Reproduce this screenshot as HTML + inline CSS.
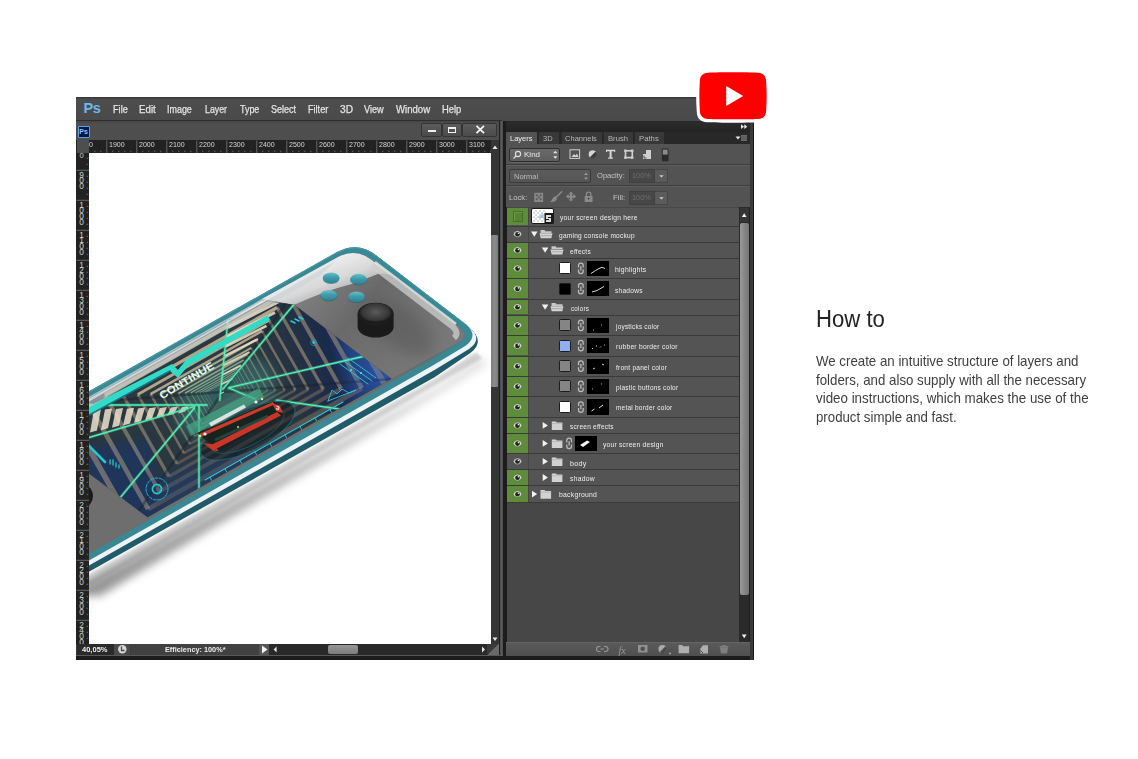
<!DOCTYPE html>
<html><head><meta charset="utf-8">
<style>
*{margin:0;padding:0;box-sizing:border-box}
html,body{width:1138px;height:759px;background:#fff;overflow:hidden;position:relative;font-family:"Liberation Sans",sans-serif}
.a{position:absolute}
.t{position:absolute;white-space:nowrap;line-height:1;transform-origin:0 0}
svg{position:absolute;overflow:visible}
</style></head><body>

<div class="a" style="left:76px;top:97px;width:678px;height:563px;background:#262626"></div>
<div class="a" style="left:76px;top:97px;width:678px;height:24px;background:linear-gradient(#3a3a3a 0,#3a3a3a 1px,#4d4d4d 2px,#4a4a4a 100%)"></div>
<div class="a" style="left:76px;top:120px;width:426px;height:1px;background:#2e2e2e"></div>
<div class="t" style="left:83.5px;top:100.5px;font-size:14.6px;font-weight:bold;color:#6fb6ee;letter-spacing:-0.4px">Ps</div>
<div class="t" style="left:113.23px;top:104.01px;font-size:10.5px;color:#e4e4e4;font-weight:normal;letter-spacing:0px;transform:scaleX(0.877);-webkit-text-stroke:0.25px #e4e4e4">File</div>
<div class="t" style="left:139.13px;top:104.01px;font-size:10.5px;color:#e4e4e4;font-weight:normal;letter-spacing:0px;transform:scaleX(0.925);-webkit-text-stroke:0.25px #e4e4e4">Edit</div>
<div class="t" style="left:167.33px;top:104.01px;font-size:10.5px;color:#e4e4e4;font-weight:normal;letter-spacing:0px;transform:scaleX(0.851);-webkit-text-stroke:0.25px #e4e4e4">Image</div>
<div class="t" style="left:205.13px;top:104.01px;font-size:10.5px;color:#e4e4e4;font-weight:normal;letter-spacing:0px;transform:scaleX(0.839);-webkit-text-stroke:0.25px #e4e4e4">Layer</div>
<div class="t" style="left:239.63px;top:104.01px;font-size:10.5px;color:#e4e4e4;font-weight:normal;letter-spacing:0px;transform:scaleX(0.849);-webkit-text-stroke:0.25px #e4e4e4">Type</div>
<div class="t" style="left:270.53px;top:104.01px;font-size:10.5px;color:#e4e4e4;font-weight:normal;letter-spacing:0px;transform:scaleX(0.861);-webkit-text-stroke:0.25px #e4e4e4">Select</div>
<div class="t" style="left:308.03px;top:104.01px;font-size:10.5px;color:#e4e4e4;font-weight:normal;letter-spacing:0px;transform:scaleX(0.867);-webkit-text-stroke:0.25px #e4e4e4">Filter</div>
<div class="t" style="left:340.13px;top:104.01px;font-size:10.5px;color:#e4e4e4;font-weight:normal;letter-spacing:0px;transform:scaleX(0.97);-webkit-text-stroke:0.25px #e4e4e4">3D</div>
<div class="t" style="left:364.13px;top:104.01px;font-size:10.5px;color:#e4e4e4;font-weight:normal;letter-spacing:0px;transform:scaleX(0.874);-webkit-text-stroke:0.25px #e4e4e4">View</div>
<div class="t" style="left:396.33px;top:104.01px;font-size:10.5px;color:#e4e4e4;font-weight:normal;letter-spacing:0px;transform:scaleX(0.914);-webkit-text-stroke:0.25px #e4e4e4">Window</div>
<div class="t" style="left:442.43px;top:104.01px;font-size:10.5px;color:#e4e4e4;font-weight:normal;letter-spacing:0px;transform:scaleX(0.895);-webkit-text-stroke:0.25px #e4e4e4">Help</div>
<div class="a" style="left:76px;top:121px;width:426px;height:19px;background:linear-gradient(#454545,#4f4f4f 3px,#4e4e4e)"></div>
<div class="a" style="left:77.5px;top:125.5px;width:12.3px;height:12.0px;background:#061747;border:1px solid #5e9ee6;border-radius:1px"></div>
<div class="t" style="left:79.3px;top:127.6px;font-size:7px;font-weight:bold;color:#8cc4ff">Ps</div>
<div class="a" style="left:420.9px;top:122.7px;width:20.7px;height:13.9px;background:linear-gradient(#5c5c5c,#4b4b4b);border:1px solid #343434;border-radius:2px"></div>
<div class="a" style="left:441.8px;top:122.7px;width:20.4px;height:13.9px;background:linear-gradient(#5c5c5c,#4b4b4b);border:1px solid #343434;border-radius:2px"></div>
<div class="a" style="left:462.4px;top:122.7px;width:35.0px;height:13.9px;background:linear-gradient(#5c5c5c,#4b4b4b);border:1px solid #343434;border-radius:2px"></div>
<div class="a" style="left:427.5px;top:130.3px;width:8.0px;height:2.0px;background:#f0f0f0"></div>
<div class="a" style="left:448px;top:126.5px;width:8px;height:6.5px;border:1.6px solid #f0f0f0;border-top-width:2.4px"></div>
<svg style="left:0;top:0" width="1" height="1"><path d="M476.5 125.8 L484 133.2 M484 125.8 L476.5 133.2" stroke="#f4f4f4" stroke-width="1.8"/></svg>
<div class="a" style="left:76px;top:140px;width:415px;height:13px;background:#222"></div>
<div class="a" style="left:76px;top:153px;width:13px;height:491px;background:#222"></div>
<div class="a" style="left:76.5px;top:140px;width:12.5px;height:12.5px;background:#4e4e4e"></div>
<svg style="left:0;top:0" width="1" height="1"><path d="M94.8 150.6V152.2 M100.8 150.6V152.2 M106.8 140.5V153 M112.8 150.6V152.2 M118.8 150.6V152.2 M124.8 150.6V152.2 M130.8 150.6V152.2 M136.8 140.5V153 M142.8 150.6V152.2 M148.8 150.6V152.2 M154.8 150.6V152.2 M160.8 150.6V152.2 M166.8 140.5V153 M172.8 150.6V152.2 M178.8 150.6V152.2 M184.8 150.6V152.2 M190.8 150.6V152.2 M196.8 140.5V153 M202.8 150.6V152.2 M208.8 150.6V152.2 M214.8 150.6V152.2 M220.8 150.6V152.2 M226.8 140.5V153 M232.8 150.6V152.2 M238.8 150.6V152.2 M244.8 150.6V152.2 M250.8 150.6V152.2 M256.8 140.5V153 M262.8 150.6V152.2 M268.8 150.6V152.2 M274.8 150.6V152.2 M280.8 150.6V152.2 M286.8 140.5V153 M292.8 150.6V152.2 M298.8 150.6V152.2 M304.8 150.6V152.2 M310.8 150.6V152.2 M316.8 140.5V153 M322.8 150.6V152.2 M328.8 150.6V152.2 M334.8 150.6V152.2 M340.8 150.6V152.2 M346.8 140.5V153 M352.8 150.6V152.2 M358.8 150.6V152.2 M364.8 150.6V152.2 M370.8 150.6V152.2 M376.8 140.5V153 M382.8 150.6V152.2 M388.8 150.6V152.2 M394.8 150.6V152.2 M400.8 150.6V152.2 M406.8 140.5V153 M412.8 150.6V152.2 M418.8 150.6V152.2 M424.8 150.6V152.2 M430.8 150.6V152.2 M436.8 140.5V153 M442.8 150.6V152.2 M448.8 150.6V152.2 M454.8 150.6V152.2 M460.8 150.6V152.2 M466.8 140.5V153 M472.8 150.6V152.2 M478.8 150.6V152.2 M484.8 150.6V152.2 M490.8 150.6V152.2 M86.6 158.3H88.2 M86.6 164.3H88.2 M76.5 170.3H89 M86.6 176.3H88.2 M86.6 182.3H88.2 M86.6 188.3H88.2 M86.6 194.3H88.2 M76.5 200.3H89 M86.6 206.3H88.2 M86.6 212.3H88.2 M86.6 218.3H88.2 M86.6 224.3H88.2 M76.5 230.3H89 M86.6 236.3H88.2 M86.6 242.3H88.2 M86.6 248.3H88.2 M86.6 254.3H88.2 M76.5 260.3H89 M86.6 266.3H88.2 M86.6 272.3H88.2 M86.6 278.3H88.2 M86.6 284.3H88.2 M76.5 290.3H89 M86.6 296.3H88.2 M86.6 302.3H88.2 M86.6 308.3H88.2 M86.6 314.3H88.2 M76.5 320.3H89 M86.6 326.3H88.2 M86.6 332.3H88.2 M86.6 338.3H88.2 M86.6 344.3H88.2 M76.5 350.3H89 M86.6 356.3H88.2 M86.6 362.3H88.2 M86.6 368.3H88.2 M86.6 374.3H88.2 M76.5 380.3H89 M86.6 386.3H88.2 M86.6 392.3H88.2 M86.6 398.3H88.2 M86.6 404.3H88.2 M76.5 410.3H89 M86.6 416.3H88.2 M86.6 422.3H88.2 M86.6 428.3H88.2 M86.6 434.3H88.2 M76.5 440.3H89 M86.6 446.3H88.2 M86.6 452.3H88.2 M86.6 458.3H88.2 M86.6 464.3H88.2 M76.5 470.3H89 M86.6 476.3H88.2 M86.6 482.3H88.2 M86.6 488.3H88.2 M86.6 494.3H88.2 M76.5 500.3H89 M86.6 506.3H88.2 M86.6 512.3H88.2 M86.6 518.3H88.2 M86.6 524.3H88.2 M76.5 530.3H89 M86.6 536.3H88.2 M86.6 542.3H88.2 M86.6 548.3H88.2 M86.6 554.3H88.2 M76.5 560.3H89 M86.6 566.3H88.2 M86.6 572.3H88.2 M86.6 578.3H88.2 M86.6 584.3H88.2 M76.5 590.3H89 M86.6 596.3H88.2 M86.6 602.3H88.2 M86.6 608.3H88.2 M86.6 614.3H88.2 M76.5 620.3H89 M86.6 626.3H88.2 M86.6 632.3H88.2 M86.6 638.3H88.2" stroke="#7a7a7a" stroke-width="0.8"/></svg>
<div class="a" style="left:89px;top:140px;width:402px;height:13px;overflow:hidden"><div style="position:absolute;left:-89px;top:-140px"><div class="t" style="left:108.9px;top:140.9px;font-size:7.6px;color:#d8d8d8;transform:scaleX(0.93)">1900</div><div class="t" style="left:138.9px;top:140.9px;font-size:7.6px;color:#d8d8d8;transform:scaleX(0.93)">2000</div><div class="t" style="left:168.9px;top:140.9px;font-size:7.6px;color:#d8d8d8;transform:scaleX(0.93)">2100</div><div class="t" style="left:198.9px;top:140.9px;font-size:7.6px;color:#d8d8d8;transform:scaleX(0.93)">2200</div><div class="t" style="left:228.9px;top:140.9px;font-size:7.6px;color:#d8d8d8;transform:scaleX(0.93)">2300</div><div class="t" style="left:258.9px;top:140.9px;font-size:7.6px;color:#d8d8d8;transform:scaleX(0.93)">2400</div><div class="t" style="left:288.9px;top:140.9px;font-size:7.6px;color:#d8d8d8;transform:scaleX(0.93)">2500</div><div class="t" style="left:318.9px;top:140.9px;font-size:7.6px;color:#d8d8d8;transform:scaleX(0.93)">2600</div><div class="t" style="left:348.9px;top:140.9px;font-size:7.6px;color:#d8d8d8;transform:scaleX(0.93)">2700</div><div class="t" style="left:378.9px;top:140.9px;font-size:7.6px;color:#d8d8d8;transform:scaleX(0.93)">2800</div><div class="t" style="left:408.9px;top:140.9px;font-size:7.6px;color:#d8d8d8;transform:scaleX(0.93)">2900</div><div class="t" style="left:438.9px;top:140.9px;font-size:7.6px;color:#d8d8d8;transform:scaleX(0.93)">3000</div><div class="t" style="left:468.9px;top:140.9px;font-size:7.6px;color:#d8d8d8;transform:scaleX(0.93)">3100</div><div class="t" style="left:89.2px;top:140.9px;font-size:7.6px;color:#d8d8d8;transform:scaleX(0.93)">0</div></div></div>
<div class="a" style="left:76px;top:153px;width:13px;height:491px;overflow:hidden"><div style="position:absolute;left:-76px;top:-153px"><div class="t" style="left:78.6px;top:172.5px;font-size:8.3px;color:#d0d0d0;line-height:5.85px;width:6px;white-space:normal;text-align:center">9<br>0<br>0</div><div class="t" style="left:78.6px;top:202.5px;font-size:8.3px;color:#d0d0d0;line-height:5.85px;width:6px;white-space:normal;text-align:center">1<br>0<br>0<br>0</div><div class="t" style="left:78.6px;top:232.5px;font-size:8.3px;color:#d0d0d0;line-height:5.85px;width:6px;white-space:normal;text-align:center">1<br>1<br>0<br>0</div><div class="t" style="left:78.6px;top:262.5px;font-size:8.3px;color:#d0d0d0;line-height:5.85px;width:6px;white-space:normal;text-align:center">1<br>2<br>0<br>0</div><div class="t" style="left:78.6px;top:292.5px;font-size:8.3px;color:#d0d0d0;line-height:5.85px;width:6px;white-space:normal;text-align:center">1<br>3<br>0<br>0</div><div class="t" style="left:78.6px;top:322.5px;font-size:8.3px;color:#d0d0d0;line-height:5.85px;width:6px;white-space:normal;text-align:center">1<br>4<br>0<br>0</div><div class="t" style="left:78.6px;top:352.5px;font-size:8.3px;color:#d0d0d0;line-height:5.85px;width:6px;white-space:normal;text-align:center">1<br>5<br>0<br>0</div><div class="t" style="left:78.6px;top:382.5px;font-size:8.3px;color:#d0d0d0;line-height:5.85px;width:6px;white-space:normal;text-align:center">1<br>6<br>0<br>0</div><div class="t" style="left:78.6px;top:412.5px;font-size:8.3px;color:#d0d0d0;line-height:5.85px;width:6px;white-space:normal;text-align:center">1<br>7<br>0<br>0</div><div class="t" style="left:78.6px;top:442.5px;font-size:8.3px;color:#d0d0d0;line-height:5.85px;width:6px;white-space:normal;text-align:center">1<br>8<br>0<br>0</div><div class="t" style="left:78.6px;top:472.5px;font-size:8.3px;color:#d0d0d0;line-height:5.85px;width:6px;white-space:normal;text-align:center">1<br>9<br>0<br>0</div><div class="t" style="left:78.6px;top:502.5px;font-size:8.3px;color:#d0d0d0;line-height:5.85px;width:6px;white-space:normal;text-align:center">2<br>0<br>0<br>0</div><div class="t" style="left:78.6px;top:532.5px;font-size:8.3px;color:#d0d0d0;line-height:5.85px;width:6px;white-space:normal;text-align:center">2<br>1<br>0<br>0</div><div class="t" style="left:78.6px;top:562.5px;font-size:8.3px;color:#d0d0d0;line-height:5.85px;width:6px;white-space:normal;text-align:center">2<br>2<br>0<br>0</div><div class="t" style="left:78.6px;top:592.5px;font-size:8.3px;color:#d0d0d0;line-height:5.85px;width:6px;white-space:normal;text-align:center">2<br>3<br>0<br>0</div><div class="t" style="left:78.6px;top:622.5px;font-size:8.3px;color:#d0d0d0;line-height:5.85px;width:6px;white-space:normal;text-align:center">2<br>4<br>0<br>0</div><div class="t" style="left:78.7px;top:152.6px;font-size:7.6px;color:#d0d0d0;line-height:5.75px;width:6px;text-align:center">0</div></div></div>
<div class="a" style="left:89px;top:153px;width:402px;height:491px;background:#fff"></div>
<svg style="left:89px;top:153px" width="402" height="491" viewBox="89 153 402 491">
<defs>
<clipPath id="cv"><rect x="89" y="153" width="402" height="491"/></clipPath>
<filter id="blur8" x="-30%" y="-30%" width="160%" height="160%"><feGaussianBlur stdDeviation="7"/></filter>
<filter id="blur4" x="-30%" y="-30%" width="160%" height="160%"><feGaussianBlur stdDeviation="4"/></filter>
<filter id="blur2" x="-30%" y="-30%" width="160%" height="160%"><feGaussianBlur stdDeviation="1.6"/></filter>
<filter id="blur1"><feGaussianBlur stdDeviation="0.6"/></filter>
<linearGradient id="shadowg" x1="89" y1="0" x2="480" y2="0" gradientUnits="userSpaceOnUse"><stop offset="0" stop-color="#000" stop-opacity="0.42"/><stop offset="0.5" stop-color="#000" stop-opacity="0.28"/><stop offset="1" stop-color="#000" stop-opacity="0.12"/></linearGradient>
<linearGradient id="grayR" x1="300" y1="270" x2="420" y2="370" gradientUnits="userSpaceOnUse"><stop offset="0" stop-color="#858585"/><stop offset="0.45" stop-color="#6a6a6a"/><stop offset="1" stop-color="#787878"/></linearGradient>
<linearGradient id="gloss" x1="330" y1="250" x2="345" y2="290" gradientUnits="userSpaceOnUse"><stop offset="0" stop-color="#f6f6f6"/><stop offset="0.7" stop-color="#d8d8d8"/><stop offset="1" stop-color="#b8b8b8"/></linearGradient>
<linearGradient id="silver" x1="0" y1="0" x2="0.35" y2="1"><stop offset="0" stop-color="#dfe3e6"/><stop offset="0.5" stop-color="#aeb4b8"/><stop offset="1" stop-color="#6c6e70"/></linearGradient>
<linearGradient id="scrR" x1="250" y1="380" x2="385" y2="350" gradientUnits="userSpaceOnUse"><stop offset="0" stop-color="#28323c" stop-opacity="0"/><stop offset="0.6" stop-color="#1a2a4c"/><stop offset="1" stop-color="#2a52a0"/></linearGradient>
<radialGradient id="cap" cx="0.5" cy="0.45" r="0.55"><stop offset="0" stop-color="#5a5a5a"/><stop offset="0.75" stop-color="#363636"/><stop offset="1" stop-color="#111"/></radialGradient>
<linearGradient id="btn" x1="0" y1="0" x2="0" y2="1"><stop offset="0" stop-color="#6cc0cc"/><stop offset="0.45" stop-color="#3f9eab"/><stop offset="1" stop-color="#2d8190"/></linearGradient>
<clipPath id="scrclip"><path d="M60 415 L262 300.5 L294.3 304.8 L391.4 378.8 L147.6 517.2 L89 473.5 L60 452Z"/></clipPath>
<clipPath id="scrclip2"><path d="M60 415 L262 300.5 L294.3 304.8 L391.4 378.8 L147.6 517.2 L89 473.5 L60 452Z"/></clipPath>
</defs>
<g clip-path="url(#cv)">
<path d="M40 596 L89 582 L440 386 L480 358 L488 364 L100 596Z" fill="url(#shadowg)" filter="url(#blur4)"/>
<path d="M60 590 L89 574 L436 378 L476 352 L482 358 L92 584Z" fill="#000" opacity="0.16" filter="url(#blur2)"/>
<path d="M60 407.5 L336.6 252.3 Q357.5 240.6 376.4 255.4 L468 326 Q486 341 471 352.5 L434.5 377.3 L60 588Z" fill="#1f5b68"/>
<path d="M60 407.5 L336.6 252.3 Q357.5 240.6 376.4 255.4 L468 326 Q484 339 469 349 L434.5 370 L60 582Z" fill="#eef4f6"/>
<path d="M60 407.5 L336.6 252.3 Q357.5 240.6 376.4 255.4 L466 324.5 Q479 335.5 466 345.5 L434.5 364.5 L60 577Z" fill="#3a8893"/>
<path d="M61 407.8 L337 252.8 Q357.5 241.4 376 255.8 L466 324.8" stroke="#459aa4" stroke-width="1" fill="none"/>
<path d="M60 415 L338 258.5 Q356 248 371 259.5 L459 327 Q470 336 459 342 L434.5 357.3 L60 570Z" fill="#6c6c6c"/>
<path d="M294.3 304.8 L338 257 Q356 248 371 259.5 L459 327 Q470 336 459 342 L391.4 378.8Z" fill="url(#grayR)"/>
<ellipse cx="398" cy="326" rx="42" ry="20" transform="rotate(35 398 326)" fill="#585858" opacity="0.55" filter="url(#blur8)"/>
<path d="M240 311 L338 257 Q356 248 371 259.5 L398 280 Q390 272 378 274 L352 284 Q330 289 294.3 304.8 L262 299Z" fill="url(#gloss)"/>
<path d="M372 265 L452 326 Q460 333 454 338" stroke="#cfcfcf" stroke-width="6" fill="none" opacity="0.75" filter="url(#blur1)"/>
<path d="M375 262 L456 324" stroke="#eeeeee" stroke-width="2.5" fill="none" opacity="0.8"/>
<path d="M60 452 L89 473.5 L147.6 517.2 L434.5 357.3 L60 570Z" fill="#6e6e6e"/>
<path d="M89 473.5 L147.6 517.2 L153 514 L89 467Z" fill="#8a7e70" opacity="0.6"/>
<g clip-path="url(#scrclip)">
<rect x="60" y="250" width="340" height="280" fill="#2a3840"/>
<path d="M240 290 L400 260 L400 400 L240 430Z" fill="url(#scrR)"/>
<path d="M60 450 L150 440 L160 530 L60 530Z" fill="#1e3566" opacity="0.7" filter="url(#blur4)"/>
<g transform="translate(223 392) rotate(-29.5)"><path d="M-170.0 -90.0 L170.0 -90.0" stroke="#e0c8a0" stroke-width="6.50" opacity="0.75"/><path d="M-170.0 -90.0 L-170.0 90.0" stroke="#c8b090" stroke-width="6.50" opacity="0.45"/><path d="M-170.0 90.0 L170.0 90.0" stroke="#b09070" stroke-width="6.50" opacity="0.35"/><path d="M170.0 -90.0 L170.0 90.0" stroke="#c0a888" stroke-width="6.50" opacity="0.5"/><path d="M-144.5 -76.5 L144.5 -76.5" stroke="#e0c8a0" stroke-width="5.52" opacity="0.75"/><path d="M-144.5 -76.5 L-144.5 76.5" stroke="#c8b090" stroke-width="5.52" opacity="0.45"/><path d="M-144.5 76.5 L144.5 76.5" stroke="#b09070" stroke-width="5.52" opacity="0.35"/><path d="M144.5 -76.5 L144.5 76.5" stroke="#c0a888" stroke-width="5.52" opacity="0.5"/><path d="M-122.8 -65.0 L122.8 -65.0" stroke="#e0c8a0" stroke-width="4.70" opacity="0.75"/><path d="M-122.8 -65.0 L-122.8 65.0" stroke="#c8b090" stroke-width="4.70" opacity="0.45"/><path d="M-122.8 65.0 L122.8 65.0" stroke="#b09070" stroke-width="4.70" opacity="0.35"/><path d="M122.8 -65.0 L122.8 65.0" stroke="#c0a888" stroke-width="4.70" opacity="0.5"/><path d="M-104.4 -55.3 L104.4 -55.3" stroke="#e0c8a0" stroke-width="3.99" opacity="0.75"/><path d="M-104.4 -55.3 L-104.4 55.3" stroke="#c8b090" stroke-width="3.99" opacity="0.45"/><path d="M-104.4 55.3 L104.4 55.3" stroke="#b09070" stroke-width="3.99" opacity="0.35"/><path d="M104.4 -55.3 L104.4 55.3" stroke="#c0a888" stroke-width="3.99" opacity="0.5"/><path d="M-88.7 -47.0 L88.7 -47.0" stroke="#e0c8a0" stroke-width="3.39" opacity="0.75"/><path d="M-88.7 -47.0 L-88.7 47.0" stroke="#c8b090" stroke-width="3.39" opacity="0.45"/><path d="M-88.7 47.0 L88.7 47.0" stroke="#b09070" stroke-width="3.39" opacity="0.35"/><path d="M88.7 -47.0 L88.7 47.0" stroke="#c0a888" stroke-width="3.39" opacity="0.5"/><path d="M-75.4 -39.9 L75.4 -39.9" stroke="#e0c8a0" stroke-width="2.88" opacity="0.75"/><path d="M-75.4 -39.9 L-75.4 39.9" stroke="#c8b090" stroke-width="2.88" opacity="0.45"/><path d="M-75.4 39.9 L75.4 39.9" stroke="#b09070" stroke-width="2.88" opacity="0.35"/><path d="M75.4 -39.9 L75.4 39.9" stroke="#c0a888" stroke-width="2.88" opacity="0.5"/><path d="M-64.1 -33.9 L64.1 -33.9" stroke="#e0c8a0" stroke-width="2.45" opacity="0.75"/><path d="M-64.1 -33.9 L-64.1 33.9" stroke="#c8b090" stroke-width="2.45" opacity="0.45"/><path d="M-64.1 33.9 L64.1 33.9" stroke="#b09070" stroke-width="2.45" opacity="0.35"/><path d="M64.1 -33.9 L64.1 33.9" stroke="#c0a888" stroke-width="2.45" opacity="0.5"/><path d="M-54.5 -28.9 L54.5 -28.9" stroke="#e0c8a0" stroke-width="2.08" opacity="0.75"/><path d="M-54.5 -28.9 L-54.5 28.9" stroke="#c8b090" stroke-width="2.08" opacity="0.45"/><path d="M-54.5 28.9 L54.5 28.9" stroke="#b09070" stroke-width="2.08" opacity="0.35"/><path d="M54.5 -28.9 L54.5 28.9" stroke="#c0a888" stroke-width="2.08" opacity="0.5"/><path d="M-46.3 -24.5 L46.3 -24.5" stroke="#e0c8a0" stroke-width="1.77" opacity="0.75"/><path d="M-46.3 -24.5 L-46.3 24.5" stroke="#c8b090" stroke-width="1.77" opacity="0.45"/><path d="M-46.3 24.5 L46.3 24.5" stroke="#b09070" stroke-width="1.77" opacity="0.35"/><path d="M46.3 -24.5 L46.3 24.5" stroke="#c0a888" stroke-width="1.77" opacity="0.5"/><path d="M-39.4 -20.8 L39.4 -20.8" stroke="#e0c8a0" stroke-width="1.51" opacity="0.75"/><path d="M-39.4 -20.8 L-39.4 20.8" stroke="#c8b090" stroke-width="1.51" opacity="0.45"/><path d="M-39.4 20.8 L39.4 20.8" stroke="#b09070" stroke-width="1.51" opacity="0.35"/><path d="M39.4 -20.8 L39.4 20.8" stroke="#c0a888" stroke-width="1.51" opacity="0.5"/><path d="M-33.5 -17.7 L33.5 -17.7" stroke="#e0c8a0" stroke-width="1.28" opacity="0.75"/><path d="M-33.5 -17.7 L-33.5 17.7" stroke="#c8b090" stroke-width="1.28" opacity="0.45"/><path d="M-33.5 17.7 L33.5 17.7" stroke="#b09070" stroke-width="1.28" opacity="0.35"/><path d="M33.5 -17.7 L33.5 17.7" stroke="#c0a888" stroke-width="1.28" opacity="0.5"/><path d="M-28.4 -15.1 L28.4 -15.1" stroke="#e0c8a0" stroke-width="1.09" opacity="0.75"/><path d="M-28.4 -15.1 L-28.4 15.1" stroke="#c8b090" stroke-width="1.09" opacity="0.45"/><path d="M-28.4 15.1 L28.4 15.1" stroke="#b09070" stroke-width="1.09" opacity="0.35"/><path d="M28.4 -15.1 L28.4 15.1" stroke="#c0a888" stroke-width="1.09" opacity="0.5"/><path d="M-24.2 -12.8 L24.2 -12.8" stroke="#e0c8a0" stroke-width="0.92" opacity="0.75"/><path d="M-24.2 -12.8 L-24.2 12.8" stroke="#c8b090" stroke-width="0.92" opacity="0.45"/><path d="M-24.2 12.8 L24.2 12.8" stroke="#b09070" stroke-width="0.92" opacity="0.35"/><path d="M24.2 -12.8 L24.2 12.8" stroke="#c0a888" stroke-width="0.92" opacity="0.5"/><path d="M-20.6 -10.9 L20.6 -10.9" stroke="#e0c8a0" stroke-width="0.79" opacity="0.75"/><path d="M-20.6 -10.9 L-20.6 10.9" stroke="#c8b090" stroke-width="0.79" opacity="0.45"/><path d="M-20.6 10.9 L20.6 10.9" stroke="#b09070" stroke-width="0.79" opacity="0.35"/><path d="M20.6 -10.9 L20.6 10.9" stroke="#c0a888" stroke-width="0.79" opacity="0.5"/><path d="M-17.5 -9.2 L17.5 -9.2" stroke="#e0c8a0" stroke-width="0.67" opacity="0.75"/><path d="M-17.5 -9.2 L-17.5 9.2" stroke="#c8b090" stroke-width="0.67" opacity="0.45"/><path d="M-17.5 9.2 L17.5 9.2" stroke="#b09070" stroke-width="0.67" opacity="0.35"/><path d="M17.5 -9.2 L17.5 9.2" stroke="#c0a888" stroke-width="0.67" opacity="0.5"/><path d="M-14.9 -7.9 L14.9 -7.9" stroke="#e0c8a0" stroke-width="0.57" opacity="0.75"/><path d="M-14.9 -7.9 L-14.9 7.9" stroke="#c8b090" stroke-width="0.57" opacity="0.45"/><path d="M-14.9 7.9 L14.9 7.9" stroke="#b09070" stroke-width="0.57" opacity="0.35"/><path d="M14.9 -7.9 L14.9 7.9" stroke="#c0a888" stroke-width="0.57" opacity="0.5"/></g>
<ellipse cx="226" cy="398" rx="55" ry="35" transform="rotate(-29 226 398)" fill="#48a898" opacity="0.32" filter="url(#blur8)"/>
<g transform="translate(223 392) rotate(-29.5)" stroke="#1a222c" stroke-width="2.5" opacity="0.45"><path d="M0 0 L-175 -82 M0 0 L175 -82 M0 0 L-175 82 M0 0 L175 82"/></g>
<path d="M79 435.0 L86 433.0 L90 409.0 L83 410.0Z" fill="#ece2cc" opacity="0.85"/><path d="M90 432.6 L97 430.6 L101 408.7 L94 409.7Z" fill="#ece2cc" opacity="0.85"/><path d="M101 430.2 L108 428.2 L112 408.4 L105 409.4Z" fill="#ece2cc" opacity="0.85"/><path d="M112 427.8 L119 425.8 L123 408.1 L116 409.1Z" fill="#ece2cc" opacity="0.85"/><path d="M123 425.4 L130 423.4 L134 407.8 L127 408.8Z" fill="#ece2cc" opacity="0.85"/><path d="M134 423.0 L141 421.0 L145 407.5 L138 408.5Z" fill="#ece2cc" opacity="0.85"/><path d="M145 420.6 L152 418.6 L156 407.2 L149 408.2Z" fill="#ece2cc" opacity="0.85"/><path d="M156 418.2 L163 416.2 L167 406.9 L160 407.9Z" fill="#ece2cc" opacity="0.85"/><path d="M167 415.8 L174 413.8 L178 406.6 L171 407.6Z" fill="#ece2cc" opacity="0.85"/><path d="M178 413.4 L185 411.4 L189 406.3 L182 407.3Z" fill="#ece2cc" opacity="0.85"/>
<path d="M229.0 318.0 L292.0 286.0" stroke="#efe4cc" stroke-width="3.40" opacity="0.85"/><path d="M227.9 327.5 L283.5 299.2" stroke="#efe4cc" stroke-width="3.12" opacity="0.85"/><path d="M226.8 337.0 L275.0 312.5" stroke="#efe4cc" stroke-width="2.85" opacity="0.85"/><path d="M225.6 346.5 L266.5 325.8" stroke="#efe4cc" stroke-width="2.57" opacity="0.85"/><path d="M224.5 356.0 L258.0 339.0" stroke="#efe4cc" stroke-width="2.30" opacity="0.85"/><path d="M223.4 365.5 L249.5 352.2" stroke="#efe4cc" stroke-width="2.02" opacity="0.85"/><path d="M222.2 375.0 L241.0 365.5" stroke="#efe4cc" stroke-width="1.75" opacity="0.85"/><path d="M221.1 384.5 L232.5 378.8" stroke="#efe4cc" stroke-width="1.47" opacity="0.85"/><path d="M220.0 394.0 L224.0 392.0" stroke="#efe4cc" stroke-width="1.20" opacity="0.85"/>
<path d="M340 320 L395 300 L395 385 L350 395Z" fill="#2e5cb0" opacity="0.35" filter="url(#blur8)"/>
<path d="M150 480 L300 430 L320 455 L160 520Z" fill="#1f3f85" opacity="0.35" filter="url(#blur8)"/>
</g>
<g clip-path="url(#scrclip2)" stroke-linecap="round">
<path d="M60 405 L207 405" stroke="#5ff5a0" stroke-width="3" opacity="0.3"/>
<path d="M60 405 L207 405" stroke="#4ff2b8" stroke-width="1.3"/>
<path d="M60 446 L194.4 406.5" stroke="#5ff5a0" stroke-width="3" opacity="0.3"/>
<path d="M60 446 L194.4 406.5" stroke="#4ff2b8" stroke-width="1.3"/>
<path d="M110 510 L194.4 408" stroke="#5ff5a0" stroke-width="3" opacity="0.3"/>
<path d="M110 510 L194.4 408" stroke="#4ff2b8" stroke-width="1.3"/>
<path d="M199 500 L199 406.5" stroke="#5ff5a0" stroke-width="3" opacity="0.3"/>
<path d="M199 500 L199 406.5" stroke="#4ff2b8" stroke-width="1.3"/>
<path d="M230 300 L219.7 400.2" stroke="#5ff5a0" stroke-width="3" opacity="0.3"/>
<path d="M230 300 L219.7 400.2" stroke="#4ff2b8" stroke-width="1.3"/>
<path d="M296 302 L222.9 389.1" stroke="#5ff5a0" stroke-width="3" opacity="0.3"/>
<path d="M296 302 L222.9 389.1" stroke="#4ff2b8" stroke-width="1.3"/>
<path d="M365 356 L229.2 387.6" stroke="#5ff5a0" stroke-width="3" opacity="0.3"/>
<path d="M365 356 L229.2 387.6" stroke="#4ff2b8" stroke-width="1.3"/>
<path d="M276.6 400.2 L350 410.5" stroke="#5ff5a0" stroke-width="3" opacity="0.3"/>
<path d="M276.6 400.2 L350 410.5" stroke="#4ff2b8" stroke-width="1.3"/>
<path d="M255 399 L229 388" stroke="#5ff5a0" stroke-width="3" opacity="0.3"/>
<path d="M255 399 L229 388" stroke="#4ff2b8" stroke-width="1.3"/>
<path d="M60 421 L172 364 L178 370 L186 360 L268 315 L270 320 L188 366 L178 378 L170 371 L60 431Z" fill="#30dcc8"/>
<path d="M60 431 L170 371" stroke="#1d6f80" stroke-width="1.5"/>
<path d="M205 480 L343 402" stroke="#2bc8d6" stroke-width="1.1"/>
<path d="M210.0 477.2 l1.6 3.2 M225.0 468.7 l1.6 3.2 M240.0 460.2 l1.6 3.2 M255.0 451.8 l1.6 3.2 M270.0 443.3 l1.6 3.2 M285.0 434.8 l1.6 3.2 M300.0 426.4 l1.6 3.2 M315.0 417.9 l1.6 3.2 M330.0 409.4 l1.6 3.2 " stroke="#2bc8d6" stroke-width="0.9"/>
<path d="M89 446 L105 462" stroke="#26c8c8" stroke-width="2.5"/>
<path d="M110 464v-4M113 465v-5M116 467v-4M119 468v-3" stroke="#26c8c8" stroke-width="1.3"/>
<circle cx="157" cy="489" r="11" fill="none" stroke="#22b8c0" stroke-width="1" stroke-dasharray="3 1.5"/><circle cx="157" cy="489" r="4.5" fill="none" stroke="#28c8c8" stroke-width="1.8" stroke-dasharray="1.8 1"/>
<path d="M340 364 L368 384 M344 361 L372 381 M348 358 L376 378" stroke="#2bc8d6" stroke-width="0.9"/><circle cx="351" cy="370" r="0.9" fill="#5ef"/><circle cx="361" cy="373" r="0.9" fill="#5ef"/>
<path d="M328 401 L332 390 L337 394 L342 389 L349 393 L356 390 L328 401" fill="none" stroke="#2bc8d6" stroke-width="0.9"/><circle cx="313.6" cy="342.6" r="1.3" fill="#3cd"/><circle cx="313.6" cy="342.6" r="3" fill="none" stroke="#29a8b8" stroke-width="0.6"/>
<path d="M291 321 l4 2 M295 319 l4 2 M299 317 l4 2" stroke="#2bc8d6" stroke-width="1.6"/>
</g>
<text transform="translate(162 399.5) rotate(-31)" font-family="Liberation Sans" font-size="10.6" fill="#e4fbf2" letter-spacing="0.2" font-weight="bold" textLength="62" lengthAdjust="spacingAndGlyphs">CONTINUE</text>
<g transform="rotate(-27 245 432)"><ellipse cx="248" cy="432" rx="52" ry="20" fill="#0a1416" opacity="0.45"/><ellipse cx="248" cy="432" rx="52" ry="20" fill="none" stroke="#1d7a80" stroke-width="1.2" opacity="0.6"/><ellipse cx="248" cy="432" rx="40" ry="15" fill="none" stroke="#1a6a70" stroke-width="1" opacity="0.6"/></g>
<path d="M186 426 L259 388 L264 397 L191 436Z" fill="#44a888" opacity="0.7"/>
<path d="M197 433 L274 401 L284 414 L219 451Z" fill="#16241f"/>
<path d="M199 434 L273 402 L274.5 404.5 L201 437Z" fill="#cf3a2e"/>
<path d="M209 423 L244 404.5 L246 407.5 L211 426.5Z" fill="#e8ecea" opacity="0.9"/>
<path d="M208 446.5 L277 412 L281 415.5 L213 450.5Z" fill="#c8352a"/>
<path d="M203 443 L213 450.5 L219 451 L212 444Z" fill="#c8352a"/>
<path d="M272 403 L280 406 L283 413 L276 411Z" fill="#d23b2e"/><path d="M276.5 406 l2.5 1 l-0.5 2.5 l-2.5 -0.8" stroke="#fff" stroke-width="0.9" fill="none"/>
<circle cx="205" cy="434" r="1.6" fill="#f0f0f0"/><circle cx="200" cy="436" r="1.2" fill="#e8e890"/><circle cx="256" cy="402" r="1.6" fill="#f0f0f0"/><circle cx="262" cy="399" r="1.2" fill="#e8e890"/>
<path d="M215 440 L268 416" stroke="#2d4a44" stroke-width="3" opacity="0.8"/><circle cx="238" cy="427" r="1" fill="#c8e070"/>
<path d="M60 415 L338 258.5 L320 276 L60 424Z" fill="#cdd2d6" opacity="0.6"/><path d="M60 415 L338 258.5 L334 262 L60 418Z" fill="#eef2f4" opacity="0.7"/>
<path d="M60 415 L338 258.5 L262 299 L60 413Z" fill="#e8ecee" opacity="0.6"/>
<ellipse cx="331.1" cy="278.6" rx="8.4" ry="5.4" fill="#1f6672" opacity="0.6"/>
<ellipse cx="331.1" cy="277.8" rx="8.3" ry="5.4" fill="url(#btn)"/>
<ellipse cx="358.5" cy="280.0" rx="8.4" ry="5.4" fill="#1f6672" opacity="0.6"/>
<ellipse cx="358.5" cy="279.2" rx="8.3" ry="5.4" fill="url(#btn)"/>
<ellipse cx="328.7" cy="296.1" rx="8.4" ry="5.4" fill="#1f6672" opacity="0.6"/>
<ellipse cx="328.7" cy="295.3" rx="8.3" ry="5.4" fill="url(#btn)"/>
<ellipse cx="356.4" cy="297.6" rx="8.4" ry="5.4" fill="#1f6672" opacity="0.6"/>
<ellipse cx="356.4" cy="296.8" rx="8.3" ry="5.4" fill="url(#btn)"/>
<path d="M357.6 314 L357.6 327 A18 10.5 0 0 0 393.6 327 L393.6 314Z" fill="#1a1a1a"/>
<ellipse cx="375.6" cy="314" rx="18" ry="11.2" fill="#1e1e1e"/>
<ellipse cx="375.6" cy="313" rx="16.5" ry="10" fill="url(#cap)"/>
<ellipse cx="84" cy="496" rx="9" ry="11" fill="#1a1a1a"/>
</g></svg>
<div class="a" style="left:491px;top:140px;width:8.2px;height:504px;background:#353535"></div>
<div class="a" style="left:491px;top:234.6px;width:7.2px;height:152.0px;background:linear-gradient(90deg,#7c7c7c,#8c8c8c,#7c7c7c);border-radius:1px"></div>
<svg style="left:0;top:0" width="1" height="1"><path d="M492.5 149 L497.5 149 L495 145.5Z M492.5 637.5 L497.5 637.5 L495 641Z" fill="#e8e8e8"/></svg>
<div class="a" style="left:499.2px;top:121px;width:0.8px;height:539px;background:#1e1e1e"></div>
<div class="a" style="left:500px;top:121px;width:3px;height:539px;background:linear-gradient(90deg,#4a4a4a,#5a5a5a 50%,#4a4a4a)"></div>
<div class="a" style="left:76px;top:643.6px;width:423px;height:11.4px;background:#3c3c3c"></div>
<div class="a" style="left:76.5px;top:643.6px;width:37.1px;height:11.4px;background:#2a2a2a"></div>
<div class="t" style="left:82.44px;top:645.75px;font-size:7.5px;color:#f0f0f0;font-weight:bold;letter-spacing:0px;transform:scaleX(1.003);">40,05%</div>
<div class="a" style="left:113.6px;top:643.6px;width:16.9px;height:11.4px;background:#4a4a4a"></div>
<svg style="left:0;top:0" width="1" height="1"><circle cx="122.3" cy="649.3" r="4.2" fill="#d8d8d8"/><path d="M121.5 646.5V650.5H124.5" stroke="#4a4a4a" stroke-width="1.3" fill="none"/></svg>
<div class="a" style="left:130.5px;top:643.6px;width:128.5px;height:11.4px;background:#414141"></div>
<div class="t" style="left:165.24px;top:646.15px;font-size:7.5px;color:#ececec;font-weight:bold;letter-spacing:0px;transform:scaleX(0.974);">Efficiency: 100%*</div>
<div class="a" style="left:259px;top:643.6px;width:10px;height:11.4px;background:#555"></div>
<div class="a" style="left:269px;top:643.6px;width:218px;height:11.4px;background:#292929"></div>
<div class="a" style="left:328px;top:645px;width:29.5px;height:8.5px;background:linear-gradient(#969696,#7c7c7c);border-radius:2px"></div>
<svg style="left:0;top:0" width="1" height="1"><path d="M262 645.5 L267.5 649.5 L262 653.5Z" fill="#f4f4f4"/><path d="M276.6 646.6 L273.6 649.5 L276.6 652.4Z M482 646.6 L485 649.5 L482 652.4Z" fill="#e4e4e4"/></svg>
<div class="a" style="left:487px;top:643.6px;width:12px;height:11.4px;background:linear-gradient(135deg,#3a3a3a 50%,#6a6a6a 50%)"></div>
<div class="a" style="left:76px;top:655px;width:427px;height:1.4px;background:#595959"></div>
<div class="a" style="left:76px;top:656.4px;width:678px;height:3.6px;background:#1c1c1c"></div>
<div class="a" style="left:503px;top:121px;width:2.5px;height:539px;background:#1c1c1c"></div>
<div class="a" style="left:505.5px;top:122px;width:244.5px;height:10px;background:linear-gradient(#2c2c2c,#232323)"></div>
<svg style="left:0;top:0" width="1" height="1"><path d="M741 124.3 L744 126.7 L741 129.1Z M744.3 124.3 L747.3 126.7 L744.3 129.1Z" fill="#e8e8e8"/></svg>
<div class="a" style="left:505.5px;top:132px;width:244.5px;height:12px;background:#282828"></div>
<div class="a" style="left:505.5px;top:131.8px;width:31.8px;height:12.7px;background:#535353;border-radius:1px 1px 0 0"></div>
<div class="a" style="left:537.8px;top:131.8px;width:21.2px;height:12.2px;background:#383838;border-left:1px solid #2a2a2a"></div>
<div class="a" style="left:560.5px;top:131.8px;width:41.8px;height:12.2px;background:#383838;border-left:1px solid #2a2a2a"></div>
<div class="a" style="left:603px;top:131.8px;width:29.7px;height:12.2px;background:#383838;border-left:1px solid #2a2a2a"></div>
<div class="a" style="left:633.6px;top:131.8px;width:30.4px;height:12.2px;background:#383838;border-left:1px solid #2a2a2a"></div>
<div class="t" style="left:510.23px;top:135.1px;font-size:7.8px;color:#f0f0f0;font-weight:normal;letter-spacing:0px;transform:scaleX(0.955);">Layers</div>
<div class="t" style="left:543.33px;top:135.1px;font-size:7.8px;color:#b8b8b8;font-weight:normal;letter-spacing:0px;transform:scaleX(0.968);">3D</div>
<div class="t" style="left:565.23px;top:135.1px;font-size:7.8px;color:#b8b8b8;font-weight:normal;letter-spacing:0px;transform:scaleX(0.966);">Channels</div>
<div class="t" style="left:607.93px;top:135.1px;font-size:7.8px;color:#b8b8b8;font-weight:normal;letter-spacing:0px;transform:scaleX(0.984);">Brush</div>
<div class="t" style="left:638.73px;top:135.1px;font-size:7.8px;color:#b8b8b8;font-weight:normal;letter-spacing:0px;transform:scaleX(0.99);">Paths</div>
<svg style="left:0;top:0" width="1" height="1"><path d="M735.5 136.5 L740.5 136.5 L738 139.5Z" fill="#e8e8e8"/><rect x="741" y="135" width="6" height="6" fill="#6a6a6a"/><path d="M741 137H747M741 139H747" stroke="#4a4a4a" stroke-width="0.7"/></svg>
<div class="a" style="left:505.5px;top:144px;width:244.5px;height:63px;background:#535353"></div>
<div class="a" style="left:505.5px;top:164.3px;width:244.5px;height:1.0px;background:#3d3d3d"></div>
<div class="a" style="left:505.5px;top:165.3px;width:244.5px;height:0.9px;background:#5e5e5e"></div>
<div class="a" style="left:505.5px;top:185.2px;width:244.5px;height:1.0px;background:#3d3d3d"></div>
<div class="a" style="left:505.5px;top:186.2px;width:244.5px;height:0.9px;background:#5e5e5e"></div>
<div class="a" style="left:508.6px;top:147.7px;width:51.9px;height:14.6px;background:linear-gradient(#6a6a6a,#5e5e5e);border:1px solid #2e2e2e;border-radius:2px;box-shadow:0 1px 0 #646464"></div>
<svg style="left:0;top:0" width="1" height="1"><circle cx="518" cy="154" r="2.6" stroke="#e0e0e0" stroke-width="1.1" fill="none"/><path d="M516.2 155.8 L513.5 158.6" stroke="#e0e0e0" stroke-width="1.3"/><path d="M553.2 153.3 L557.5 153.3 L555.35 150.8Z M553.2 156.2 L557.5 156.2 L555.35 158.7Z" fill="#e4e4e4"/></svg>
<div class="t" style="left:524.23px;top:151.4px;font-size:7.8px;color:#e8e8e8;font-weight:normal;letter-spacing:0px;transform:scaleX(1.028);">Kind</div>
<svg style="left:0;top:0" width="1" height="1">
<rect x="570" y="149.8" width="9.6" height="8.6" fill="none" stroke="#d0d0d0" stroke-width="1"/><path d="M571.5 157 L574 154 L575.5 155.5 L577 153.5 L578.5 157Z" fill="#d0d0d0"/>
<circle cx="592.6" cy="154.2" r="4.4" fill="#1f1f1f" opacity="0.5"/><circle cx="592.6" cy="154.2" r="4" fill="#d4d4d4"/><path d="M589.9 157.2 L595.6 151.5 A4 4 0 0 1 589.9 157.2Z" fill="#3c3c3c"/>
<path d="M606 149.8H615.2V152H614.2V151.2H611.6V157.6H613V158.8H608.2V157.6H609.6V151.2H607V152H606Z" fill="#d8d8d8"/>
<rect x="625.5" y="150.8" width="6.8" height="6.8" fill="none" stroke="#d0d0d0" stroke-width="1.6"/><rect x="624.2" y="149.5" width="2.4" height="2.4" fill="#d0d0d0"/><rect x="631" y="149.5" width="2.4" height="2.4" fill="#d0d0d0"/><rect x="624.2" y="156.4" width="2.4" height="2.4" fill="#d0d0d0"/><rect x="631" y="156.4" width="2.4" height="2.4" fill="#d0d0d0"/>
<path d="M646 150H651V159H643V154H646Z" fill="#d0d0d0"/><path d="M644 155.5V158H646.5" stroke="#535353" stroke-width="1" fill="none"/>
<rect x="661.8" y="148.6" width="6.8" height="12.6" fill="#2a2a2a" rx="1"/><rect x="662.8" y="149.6" width="4.8" height="5" fill="#8a8a8a"/>
</svg>
<div class="a" style="left:509px;top:169px;width:82.4px;height:14px;background:linear-gradient(#5c5c5c,#555);border:1px solid #3a3a3a;border-radius:2px"></div>
<div class="t" style="left:514.23px;top:172.7px;font-size:7.8px;color:#bcbcbc;font-weight:normal;letter-spacing:0px;transform:scaleX(0.964);">Normal</div>
<svg style="left:0;top:0" width="1" height="1"><path d="M584 175 L588 175 L586 172.8Z M584 177.6 L588 177.6 L586 179.8Z" fill="#9a9a9a"/></svg>
<div class="t" style="left:596.53px;top:172.4px;font-size:7.8px;color:#c4c4c4;font-weight:normal;letter-spacing:0px;transform:scaleX(0.97);">Opacity:</div>
<div class="a" style="left:629px;top:169px;width:26px;height:13.7px;background:#474747;border:1px solid #404040"></div>
<div class="t" style="left:632.43px;top:172.4px;font-size:7.8px;color:#6e6e6e;font-weight:normal;letter-spacing:0px;transform:scaleX(0.945);">100%</div>
<div class="a" style="left:655px;top:169px;width:13px;height:13.7px;background:#5b5b5b;border:1px solid #474747;border-left:none"></div>
<svg style="left:0;top:0" width="1" height="1"><path d="M659.3 175.3 L663.7 175.3 L661.5 177.6Z" fill="#cfcfcf"/></svg>
<div class="t" style="left:509.23px;top:193.7px;font-size:7.8px;color:#c4c4c4;font-weight:normal;letter-spacing:0px;transform:scaleX(0.984);">Lock:</div>
<svg style="left:0;top:0" width="1" height="1">
<rect x="534.3" y="192.8" width="8.8" height="9.2" fill="#8a8a8a"/><path d="M535.8 194.3h1.9v1.9h-1.9zM539.7 194.3h1.9v1.9h-1.9zM537.7 196.3h1.9v1.9h-1.9zM535.8 198.3h1.9v1.9h-1.9zM539.7 198.3h1.9v1.9h-1.9z" fill="#5c5c5c"/>
<path d="M561.8 191.8 L555.6 197.6" stroke="#8a8a8a" stroke-width="1.5" stroke-linecap="round"/><path d="M555.8 196.6 C553.8 196.2 552.6 198 552.2 199.6 C551.8 200.8 550.6 201.6 549.8 201.8 C552.6 202.4 556.2 201.6 557 199 Z" fill="#8a8a8a"/>
<path d="M571 191.6 L573.3 194 H572 V195.4 H573.5 V194.1 L576 196.6 L573.5 199.1 V197.8 H572 V199.2 H573.3 L571 201.6 L568.7 199.2 H570 V197.8 H568.5 V199.1 L566 196.6 L568.5 194.1 V195.4 H570 V194 H568.7 Z" fill="#8a8a8a"/>
<rect x="584.7" y="196" width="7.9" height="6" rx="0.6" fill="#8a8a8a"/><path d="M586.4 196.2 V194.4 a2.25 2.25 0 0 1 4.5 0 V196.2" stroke="#8a8a8a" stroke-width="1.2" fill="none"/><circle cx="588.65" cy="198.6" r="0.9" fill="#3e3e3e"/>
</svg>
<div class="t" style="left:612.73px;top:193.6px;font-size:7.8px;color:#c4c4c4;font-weight:normal;letter-spacing:0px;transform:scaleX(0.992);">Fill:</div>
<div class="a" style="left:629px;top:191px;width:26px;height:13.5px;background:#474747;border:1px solid #404040"></div>
<div class="t" style="left:632.43px;top:194.1px;font-size:7.8px;color:#6e6e6e;font-weight:normal;letter-spacing:0px;transform:scaleX(0.945);">100%</div>
<div class="a" style="left:655px;top:191px;width:13px;height:13.5px;background:#5b5b5b;border:1px solid #474747;border-left:none"></div>
<svg style="left:0;top:0" width="1" height="1"><path d="M659.3 197.3 L663.7 197.3 L661.5 199.6Z" fill="#cfcfcf"/></svg>
<div class="a" style="left:505.5px;top:207px;width:233.5px;height:435px;background:#474747"></div>
<div class="a" style="left:505.5px;top:207px;width:1.3px;height:435px;background:#1e1e1e"></div>
<div class="a" style="left:506.8px;top:207.7px;width:232.2px;height:19.1px;background:#545454;border-bottom:1.4px solid #3a3a3a"></div>
<div class="a" style="left:506.8px;top:207.7px;width:21.4px;height:17.7px;background:#5f8c3a"></div>
<div class="a" style="left:528.2px;top:207.7px;width:0.8px;height:17.7px;background:#464646"></div>
<div class="a" style="left:512.5px;top:210.5px;width:10.0px;height:11.0px;background:#568432;border:1px solid #467028;box-shadow:inset 1px 1px 0 #6a9a44"></div>
<div class="a" style="left:531px;top:208px;width:22.8px;height:15.8px;background:#fff;border:1.2px solid #1a1a1a;border-radius:2px"></div>
<div class="a" style="left:532.5px;top:209.5px;width:13px;height:12.5px;background:repeating-conic-gradient(#dcdcdc 0 25%,#fff 0 50%) 0 0/4px 4px"></div>
<div class="a" style="left:506.8px;top:226.8px;width:232.2px;height:15.9px;background:#545454;border-bottom:1.4px solid #3a3a3a"></div>
<div class="a" style="left:528.2px;top:226.8px;width:0.8px;height:14.5px;background:#464646"></div>
<div class="a" style="left:506.8px;top:242.7px;width:232.2px;height:16.4px;background:#545454;border-bottom:1.4px solid #3a3a3a"></div>
<div class="a" style="left:506.8px;top:242.7px;width:21.4px;height:15.0px;background:#5f8c3a"></div>
<div class="a" style="left:528.2px;top:242.7px;width:0.8px;height:15.0px;background:#464646"></div>
<div class="a" style="left:506.8px;top:259.1px;width:232.2px;height:20.0px;background:#545454;border-bottom:1.4px solid #3a3a3a"></div>
<div class="a" style="left:506.8px;top:259.1px;width:21.4px;height:18.6px;background:#5f8c3a"></div>
<div class="a" style="left:528.2px;top:259.1px;width:0.8px;height:18.6px;background:#464646"></div>
<div class="a" style="left:559px;top:262.40000000000003px;width:11.6px;height:12.0px;background:#ffffff;border:1.2px solid #1c1c1c;border-radius:1.5px"></div>
<div class="a" style="left:586.8px;top:260.8px;width:22.0px;height:15.2px;background:#000"></div>
<div class="a" style="left:506.8px;top:279.1px;width:232.2px;height:20.6px;background:#545454;border-bottom:1.4px solid #3a3a3a"></div>
<div class="a" style="left:506.8px;top:279.1px;width:21.4px;height:19.2px;background:#5f8c3a"></div>
<div class="a" style="left:528.2px;top:279.1px;width:0.8px;height:19.2px;background:#464646"></div>
<div class="a" style="left:559px;top:282.7px;width:11.6px;height:12.0px;background:#000000;border:1.2px solid #1c1c1c;border-radius:1.5px"></div>
<div class="a" style="left:586.8px;top:281.09999999999997px;width:22.0px;height:15.2px;background:#000"></div>
<div class="a" style="left:506.8px;top:299.7px;width:232.2px;height:16.2px;background:#545454;border-bottom:1.4px solid #3a3a3a"></div>
<div class="a" style="left:506.8px;top:299.7px;width:21.4px;height:14.8px;background:#5f8c3a"></div>
<div class="a" style="left:528.2px;top:299.7px;width:0.8px;height:14.8px;background:#464646"></div>
<div class="a" style="left:506.8px;top:315.9px;width:232.2px;height:20.2px;background:#545454;border-bottom:1.4px solid #3a3a3a"></div>
<div class="a" style="left:506.8px;top:315.9px;width:21.4px;height:18.8px;background:#5f8c3a"></div>
<div class="a" style="left:528.2px;top:315.9px;width:0.8px;height:18.8px;background:#464646"></div>
<div class="a" style="left:559px;top:319.3px;width:11.6px;height:12.0px;background:#858585;border:1.2px solid #1c1c1c;border-radius:1.5px"></div>
<div class="a" style="left:586.8px;top:317.7px;width:22.0px;height:15.2px;background:#000"></div>
<div class="a" style="left:506.8px;top:336.1px;width:232.2px;height:20.6px;background:#545454;border-bottom:1.4px solid #3a3a3a"></div>
<div class="a" style="left:506.8px;top:336.1px;width:21.4px;height:19.2px;background:#5f8c3a"></div>
<div class="a" style="left:528.2px;top:336.1px;width:0.8px;height:19.2px;background:#464646"></div>
<div class="a" style="left:559px;top:339.7px;width:11.6px;height:12.0px;background:#8fb0f0;border:1.2px solid #1c1c1c;border-radius:1.5px"></div>
<div class="a" style="left:586.8px;top:338.09999999999997px;width:22.0px;height:15.2px;background:#000"></div>
<div class="a" style="left:506.8px;top:356.7px;width:232.2px;height:20.3px;background:#545454;border-bottom:1.4px solid #3a3a3a"></div>
<div class="a" style="left:506.8px;top:356.7px;width:21.4px;height:18.9px;background:#5f8c3a"></div>
<div class="a" style="left:528.2px;top:356.7px;width:0.8px;height:18.9px;background:#464646"></div>
<div class="a" style="left:559px;top:360.15000000000003px;width:11.6px;height:12.0px;background:#858585;border:1.2px solid #1c1c1c;border-radius:1.5px"></div>
<div class="a" style="left:586.8px;top:358.55px;width:22.0px;height:15.2px;background:#000"></div>
<div class="a" style="left:506.8px;top:377px;width:232.2px;height:20.3px;background:#545454;border-bottom:1.4px solid #3a3a3a"></div>
<div class="a" style="left:506.8px;top:377px;width:21.4px;height:18.9px;background:#5f8c3a"></div>
<div class="a" style="left:528.2px;top:377px;width:0.8px;height:18.9px;background:#464646"></div>
<div class="a" style="left:559px;top:380.45px;width:11.6px;height:12.0px;background:#858585;border:1.2px solid #1c1c1c;border-radius:1.5px"></div>
<div class="a" style="left:586.8px;top:378.84999999999997px;width:22.0px;height:15.2px;background:#000"></div>
<div class="a" style="left:506.8px;top:397.3px;width:232.2px;height:20.9px;background:#545454;border-bottom:1.4px solid #3a3a3a"></div>
<div class="a" style="left:506.8px;top:397.3px;width:21.4px;height:19.5px;background:#5f8c3a"></div>
<div class="a" style="left:528.2px;top:397.3px;width:0.8px;height:19.5px;background:#464646"></div>
<div class="a" style="left:559px;top:401.05px;width:11.6px;height:12.0px;background:#ffffff;border:1.2px solid #1c1c1c;border-radius:1.5px"></div>
<div class="a" style="left:586.8px;top:399.45px;width:22.0px;height:15.2px;background:#000"></div>
<div class="a" style="left:506.8px;top:418.2px;width:232.2px;height:15.9px;background:#545454;border-bottom:1.4px solid #3a3a3a"></div>
<div class="a" style="left:506.8px;top:418.2px;width:21.4px;height:14.5px;background:#5f8c3a"></div>
<div class="a" style="left:528.2px;top:418.2px;width:0.8px;height:14.5px;background:#464646"></div>
<div class="a" style="left:506.8px;top:434.1px;width:232.2px;height:20.0px;background:#545454;border-bottom:1.4px solid #3a3a3a"></div>
<div class="a" style="left:506.8px;top:434.1px;width:21.4px;height:18.6px;background:#5f8c3a"></div>
<div class="a" style="left:528.2px;top:434.1px;width:0.8px;height:18.6px;background:#464646"></div>
<div class="a" style="left:574.5px;top:436px;width:22.5px;height:15.2px;background:#000"></div>
<div class="a" style="left:506.8px;top:454.1px;width:232.2px;height:15.9px;background:#545454;border-bottom:1.4px solid #3a3a3a"></div>
<div class="a" style="left:528.2px;top:454.1px;width:0.8px;height:14.5px;background:#464646"></div>
<div class="a" style="left:506.8px;top:470px;width:232.2px;height:16.4px;background:#545454;border-bottom:1.4px solid #3a3a3a"></div>
<div class="a" style="left:506.8px;top:470px;width:21.4px;height:15.0px;background:#5f8c3a"></div>
<div class="a" style="left:528.2px;top:470px;width:0.8px;height:15.0px;background:#464646"></div>
<div class="a" style="left:506.8px;top:486.4px;width:232.2px;height:16.8px;background:#545454;border-bottom:1.4px solid #3a3a3a"></div>
<div class="a" style="left:506.8px;top:486.4px;width:21.4px;height:15.4px;background:#5f8c3a"></div>
<div class="a" style="left:528.2px;top:486.4px;width:0.8px;height:15.4px;background:#464646"></div>
<svg style="left:0;top:0" width="1" height="1"><path d="M538 218 L543 213 L544 218Z" fill="#9cc8f0"/><rect x="544.5" y="213" width="9" height="11" fill="#1a1a1a"/><path d="M546 215h5v2h-3v1h3v4h-5v-2h3v-1h-3z" fill="#dcdcdc"/><path d="M513.1 234.05 C514.6 229.55 520.4 229.55 521.9 234.05 C520.4 238.55 514.6 238.55 513.1 234.05Z" fill="#c8c8c8" stroke="#3a3a3a" stroke-width="0.5"/><circle cx="517.5" cy="234.25" r="2.3" fill="#1d2419"/><circle cx="518.4" cy="233.25" r="0.8" fill="#e8e8e8"/><path d="M531.0 231.5 H537.6 L534.3 236.7Z" fill="#f2f2f2"/><path d="M540.5 230.1 h4 l1 1.2 h6 v1.6 h-11z" fill="#c8c8c8"/><path d="M539.5 233.2 h13 l-1.2 5 h-10.6z" fill="#d4d4d4"/><path d="M540.5 235.7 h11" stroke="#9a9a9a" stroke-width="0.8"/><path d="M513.1 250.20 C514.6 245.70 520.4 245.70 521.9 250.20 C520.4 254.70 514.6 254.70 513.1 250.20Z" fill="#cfd8c4" stroke="#3f5a2c" stroke-width="0.5"/><circle cx="517.5" cy="250.40" r="2.3" fill="#1d2419"/><circle cx="518.4" cy="249.40" r="0.8" fill="#e8e8e8"/><path d="M541.8 247.6 H548.4 L545.1 252.8Z" fill="#f2f2f2"/><path d="M551.5 246.2 h4 l1 1.2 h6 v1.6 h-11z" fill="#c8c8c8"/><path d="M550.5 249.4 h13 l-1.2 5 h-10.6z" fill="#d4d4d4"/><path d="M551.5 251.8 h11" stroke="#9a9a9a" stroke-width="0.8"/><path d="M513.1 268.40 C514.6 263.90 520.4 263.90 521.9 268.40 C520.4 272.90 514.6 272.90 513.1 268.40Z" fill="#cfd8c4" stroke="#3f5a2c" stroke-width="0.5"/><circle cx="517.5" cy="268.60" r="2.3" fill="#1d2419"/><circle cx="518.4" cy="267.60" r="0.8" fill="#e8e8e8"/><path d="M578.5 267.40 V265.50 a2.35 2.35 0 0 1 4.7 0 V267.40 M578.5 269.40 V271.30 a2.35 2.35 0 0 0 4.7 0 V269.40 M580.85 266.20 V270.60" stroke="#bdbdbd" stroke-width="1.25" fill="none"/><path d="M591 273.5 Q596 270 599 268.5 Q602 266 605 268.5" stroke="#d8d8d8" stroke-width="1" fill="none"/><path d="M513.1 288.70 C514.6 284.20 520.4 284.20 521.9 288.70 C520.4 293.20 514.6 293.20 513.1 288.70Z" fill="#cfd8c4" stroke="#3f5a2c" stroke-width="0.5"/><circle cx="517.5" cy="288.90" r="2.3" fill="#1d2419"/><circle cx="518.4" cy="287.90" r="0.8" fill="#e8e8e8"/><path d="M578.5 287.70 V285.80 a2.35 2.35 0 0 1 4.7 0 V287.70 M578.5 289.70 V291.60 a2.35 2.35 0 0 0 4.7 0 V289.70 M580.85 286.50 V290.90" stroke="#bdbdbd" stroke-width="1.25" fill="none"/><path d="M592 292 L597 290.5 L604 286.5" stroke="#d8d8d8" stroke-width="1" fill="none"/><path d="M513.1 307.10 C514.6 302.60 520.4 302.60 521.9 307.10 C520.4 311.60 514.6 311.60 513.1 307.10Z" fill="#cfd8c4" stroke="#3f5a2c" stroke-width="0.5"/><circle cx="517.5" cy="307.30" r="2.3" fill="#1d2419"/><circle cx="518.4" cy="306.30" r="0.8" fill="#e8e8e8"/><path d="M541.8 304.5 H548.4 L545.1 309.7Z" fill="#f2f2f2"/><path d="M551.5 303.1 h4 l1 1.2 h6 v1.6 h-11z" fill="#c8c8c8"/><path d="M550.5 306.3 h13 l-1.2 5 h-10.6z" fill="#d4d4d4"/><path d="M551.5 308.7 h11" stroke="#9a9a9a" stroke-width="0.8"/><path d="M513.1 325.30 C514.6 320.80 520.4 320.80 521.9 325.30 C520.4 329.80 514.6 329.80 513.1 325.30Z" fill="#cfd8c4" stroke="#3f5a2c" stroke-width="0.5"/><circle cx="517.5" cy="325.50" r="2.3" fill="#1d2419"/><circle cx="518.4" cy="324.50" r="0.8" fill="#e8e8e8"/><path d="M578.5 324.30 V322.40 a2.35 2.35 0 0 1 4.7 0 V324.30 M578.5 326.30 V328.20 a2.35 2.35 0 0 0 4.7 0 V326.30 M580.85 323.10 V327.50" stroke="#bdbdbd" stroke-width="1.25" fill="none"/><path d="M593 330 l0.8 0 M601 325 l0.8 0" stroke="#d8d8d8" stroke-width="1" fill="none"/><path d="M513.1 345.70 C514.6 341.20 520.4 341.20 521.9 345.70 C520.4 350.20 514.6 350.20 513.1 345.70Z" fill="#cfd8c4" stroke="#3f5a2c" stroke-width="0.5"/><circle cx="517.5" cy="345.90" r="2.3" fill="#1d2419"/><circle cx="518.4" cy="344.90" r="0.8" fill="#e8e8e8"/><path d="M578.5 344.70 V342.80 a2.35 2.35 0 0 1 4.7 0 V344.70 M578.5 346.70 V348.60 a2.35 2.35 0 0 0 4.7 0 V346.70 M580.85 343.50 V347.90" stroke="#bdbdbd" stroke-width="1.25" fill="none"/><path d="M592 349 l1 -1 M596 346 l1 0 M600 347.5 l1 -1 M604 345 l0.8 0" stroke="#d8d8d8" stroke-width="1" fill="none"/><path d="M513.1 366.15 C514.6 361.65 520.4 361.65 521.9 366.15 C520.4 370.65 514.6 370.65 513.1 366.15Z" fill="#cfd8c4" stroke="#3f5a2c" stroke-width="0.5"/><circle cx="517.5" cy="366.35" r="2.3" fill="#1d2419"/><circle cx="518.4" cy="365.35" r="0.8" fill="#e8e8e8"/><path d="M578.5 365.15 V363.25 a2.35 2.35 0 0 1 4.7 0 V365.15 M578.5 367.15 V369.05 a2.35 2.35 0 0 0 4.7 0 V367.15 M580.85 363.95 V368.35" stroke="#bdbdbd" stroke-width="1.25" fill="none"/><path d="M593 369 l2 -1 M602 364 l2 1" stroke="#d8d8d8" stroke-width="1" fill="none"/><path d="M513.1 386.45 C514.6 381.95 520.4 381.95 521.9 386.45 C520.4 390.95 514.6 390.95 513.1 386.45Z" fill="#cfd8c4" stroke="#3f5a2c" stroke-width="0.5"/><circle cx="517.5" cy="386.65" r="2.3" fill="#1d2419"/><circle cx="518.4" cy="385.65" r="0.8" fill="#e8e8e8"/><path d="M578.5 385.45 V383.55 a2.35 2.35 0 0 1 4.7 0 V385.45 M578.5 387.45 V389.35 a2.35 2.35 0 0 0 4.7 0 V387.45 M580.85 384.25 V388.65" stroke="#bdbdbd" stroke-width="1.25" fill="none"/><path d="M592 389 l0.8 0 M601 384 l0.8 0" stroke="#d8d8d8" stroke-width="1" fill="none"/><path d="M513.1 407.05 C514.6 402.55 520.4 402.55 521.9 407.05 C520.4 411.55 514.6 411.55 513.1 407.05Z" fill="#cfd8c4" stroke="#3f5a2c" stroke-width="0.5"/><circle cx="517.5" cy="407.25" r="2.3" fill="#1d2419"/><circle cx="518.4" cy="406.25" r="0.8" fill="#e8e8e8"/><path d="M578.5 406.05 V404.15 a2.35 2.35 0 0 1 4.7 0 V406.05 M578.5 408.05 V409.95 a2.35 2.35 0 0 0 4.7 0 V408.05 M580.85 404.85 V409.25" stroke="#bdbdbd" stroke-width="1.25" fill="none"/><path d="M591.5 411 l3 -2 M599 408 l4 -3" stroke="#d8d8d8" stroke-width="1" fill="none"/><path d="M513.1 425.45 C514.6 420.95 520.4 420.95 521.9 425.45 C520.4 429.95 514.6 429.95 513.1 425.45Z" fill="#cfd8c4" stroke="#3f5a2c" stroke-width="0.5"/><circle cx="517.5" cy="425.65" r="2.3" fill="#1d2419"/><circle cx="518.4" cy="424.65" r="0.8" fill="#e8e8e8"/><path d="M542.7 422.1 L547.9 425.4 L542.7 428.8Z" fill="#f2f2f2"/><path d="M551.8 421.4 h4 l1 1 h5.6 v7.6 h-10.6z" fill="#d2d2d2"/><path d="M551.8 423.6 h10.6" stroke="#b0b0b0" stroke-width="0.7"/><path d="M513.1 443.40 C514.6 438.90 520.4 438.90 521.9 443.40 C520.4 447.90 514.6 447.90 513.1 443.40Z" fill="#cfd8c4" stroke="#3f5a2c" stroke-width="0.5"/><circle cx="517.5" cy="443.60" r="2.3" fill="#1d2419"/><circle cx="518.4" cy="442.60" r="0.8" fill="#e8e8e8"/><path d="M542.7 440.0 L547.9 443.4 L542.7 446.8Z" fill="#f2f2f2"/><path d="M551.8 439.4 h4 l1 1 h5.6 v7.6 h-10.6z" fill="#d2d2d2"/><path d="M551.8 441.6 h10.6" stroke="#b0b0b0" stroke-width="0.7"/><path d="M566.8 442.40 V440.50 a2.35 2.35 0 0 1 4.7 0 V442.40 M566.8 444.40 V446.30 a2.35 2.35 0 0 0 4.7 0 V444.40 M569.15 441.20 V445.60" stroke="#bdbdbd" stroke-width="1.25" fill="none"/><path d="M580 445 L587 440.5 L590 442 L583 447Z" fill="#f4f4f4"/><path d="M513.1 461.35 C514.6 456.85 520.4 456.85 521.9 461.35 C520.4 465.85 514.6 465.85 513.1 461.35Z" fill="#c8c8c8" stroke="#3a3a3a" stroke-width="0.5"/><circle cx="517.5" cy="461.55" r="2.3" fill="#1d2419"/><circle cx="518.4" cy="460.55" r="0.8" fill="#e8e8e8"/><path d="M542.7 458.0 L547.9 461.4 L542.7 464.8Z" fill="#f2f2f2"/><path d="M551.8 457.4 h4 l1 1 h5.6 v7.6 h-10.6z" fill="#d2d2d2"/><path d="M551.8 459.6 h10.6" stroke="#b0b0b0" stroke-width="0.7"/><path d="M513.1 477.50 C514.6 473.00 520.4 473.00 521.9 477.50 C520.4 482.00 514.6 482.00 513.1 477.50Z" fill="#cfd8c4" stroke="#3f5a2c" stroke-width="0.5"/><circle cx="517.5" cy="477.70" r="2.3" fill="#1d2419"/><circle cx="518.4" cy="476.70" r="0.8" fill="#e8e8e8"/><path d="M542.7 474.1 L547.9 477.5 L542.7 480.9Z" fill="#f2f2f2"/><path d="M551.8 473.5 h4 l1 1 h5.6 v7.6 h-10.6z" fill="#d2d2d2"/><path d="M551.8 475.7 h10.6" stroke="#b0b0b0" stroke-width="0.7"/><path d="M513.1 494.10 C514.6 489.60 520.4 489.60 521.9 494.10 C520.4 498.60 514.6 498.60 513.1 494.10Z" fill="#cfd8c4" stroke="#3f5a2c" stroke-width="0.5"/><circle cx="517.5" cy="494.30" r="2.3" fill="#1d2419"/><circle cx="518.4" cy="493.30" r="0.8" fill="#e8e8e8"/><path d="M532.0 490.7 L537.2 494.1 L532.0 497.5Z" fill="#f2f2f2"/><path d="M540.5 490.1 h4 l1 1 h5.6 v7.6 h-10.6z" fill="#d2d2d2"/><path d="M540.5 492.3 h10.6" stroke="#b0b0b0" stroke-width="0.7"/></svg>
<div class="t" style="left:559.73px;top:214.1px;font-size:7.8px;color:#efefef;font-weight:normal;letter-spacing:0.3px;transform:scaleX(0.858);">your screen design here</div>
<div class="t" style="left:559.13px;top:232.0px;font-size:7.8px;color:#efefef;font-weight:normal;letter-spacing:0.3px;transform:scaleX(0.839);">gaming console mockup</div>
<div class="t" style="left:570.33px;top:247.8px;font-size:7.8px;color:#efefef;font-weight:normal;letter-spacing:0.3px;transform:scaleX(0.84);">effects</div>
<div class="t" style="left:615.33px;top:266.0px;font-size:7.8px;color:#efefef;font-weight:normal;letter-spacing:0.3px;transform:scaleX(0.877);">highlights</div>
<div class="t" style="left:615.33px;top:286.6px;font-size:7.8px;color:#efefef;font-weight:normal;letter-spacing:0.3px;transform:scaleX(0.844);">shadows</div>
<div class="t" style="left:570.93px;top:304.7px;font-size:7.8px;color:#efefef;font-weight:normal;letter-spacing:0.3px;transform:scaleX(0.803);">colors</div>
<div class="t" style="left:615.63px;top:322.9px;font-size:7.8px;color:#efefef;font-weight:normal;letter-spacing:0.3px;transform:scaleX(0.819);">joysticks color</div>
<div class="t" style="left:615.63px;top:343.3px;font-size:7.8px;color:#efefef;font-weight:normal;letter-spacing:0.3px;transform:scaleX(0.856);">rubber border color</div>
<div class="t" style="left:615.63px;top:363.8px;font-size:7.8px;color:#efefef;font-weight:normal;letter-spacing:0.3px;transform:scaleX(0.837);">front panel color</div>
<div class="t" style="left:615.63px;top:383.5px;font-size:7.8px;color:#efefef;font-weight:normal;letter-spacing:0.3px;transform:scaleX(0.829);">plastic buttons color</div>
<div class="t" style="left:615.63px;top:403.9px;font-size:7.8px;color:#efefef;font-weight:normal;letter-spacing:0.3px;transform:scaleX(0.826);">metal border color</div>
<div class="t" style="left:570.43px;top:423.1px;font-size:7.8px;color:#efefef;font-weight:normal;letter-spacing:0.3px;transform:scaleX(0.833);">screen effects</div>
<div class="t" style="left:603.43px;top:441.4px;font-size:7.8px;color:#efefef;font-weight:normal;letter-spacing:0.3px;transform:scaleX(0.852);">your screen design</div>
<div class="t" style="left:570.43px;top:459.7px;font-size:7.8px;color:#efefef;font-weight:normal;letter-spacing:0.3px;transform:scaleX(0.908);">body</div>
<div class="t" style="left:570.43px;top:475.2px;font-size:7.8px;color:#efefef;font-weight:normal;letter-spacing:0.3px;transform:scaleX(0.866);">shadow</div>
<div class="t" style="left:559.23px;top:491.4px;font-size:7.8px;color:#efefef;font-weight:normal;letter-spacing:0.3px;transform:scaleX(0.872);">background</div>
<div class="a" style="left:739px;top:207px;width:11px;height:435px;background:#2a2a2a"></div>
<div class="a" style="left:739.5px;top:207.5px;width:10.0px;height:14.5px;background:#353535"></div>
<div class="a" style="left:739.8px;top:223px;width:9.0px;height:372.3px;background:linear-gradient(90deg,#9a9a9a,#828282 60%,#767676);border-radius:2px"></div>
<div class="a" style="left:748.8px;top:207px;width:1.0px;height:435px;background:#1e1e1e"></div>
<div class="a" style="left:749.8px;top:122px;width:2.9px;height:538px;background:#393939"></div>
<div class="a" style="left:752.7px;top:122px;width:1.3px;height:538px;background:#1c1c1c"></div>
<svg style="left:0;top:0" width="1" height="1"><path d="M741.8 217 L746.6 217 L744.2 213.2Z M741.8 634.5 L746.6 634.5 L744.2 638.3Z" fill="#f0f0f0"/></svg>
<div class="a" style="left:505.5px;top:641.8px;width:244.5px;height:14.6px;background:linear-gradient(#5a5a5a,#4f4f4f);border-top:1px solid #646464"></div>
<svg style="left:0;top:0" width="1" height="1" opacity="0.8">
<path d="M600.5 646.5h-1.5a2.5 2.5 0 0 0 0 5h1.5M604 646.5h1.5a2.5 2.5 0 0 1 0 5H604M600.5 649h3.5" stroke="#a8a8a8" stroke-width="1.1" fill="none"/>
<text x="618.5" y="653.5" font-family="Liberation Serif" font-style="italic" font-size="10" fill="#a8a8a8">fx</text>
<rect x="638" y="645" width="9.5" height="7.5" fill="#a0a0a0"/><circle cx="642.7" cy="648.7" r="2.3" fill="#505050"/>
<circle cx="662.5" cy="649" r="4" fill="#c0c0c0"/><path d="M659.8 652 L665.5 646.3 A4 4 0 0 1 659.8 652Z" fill="#484848"/><circle cx="670" cy="653.4" r="0.8" fill="#ddd"/>
<path d="M678.6 645 h3.5 l1 1.2 h6 v7 h-10.5z" fill="#c6c6c6"/>
<path d="M703 645.2 h5 v8.2 h-7.6 v-5 z" fill="#c6c6c6"/><path d="M700.6 650.5 l2.4 2.6" stroke="#505050" stroke-width="1"/>
<path d="M720 647.2 h8 l-0.9 6.4 h-6.2z M719.5 646 h9 v1 h-9z M722.5 645 h3 v1 h-3z" fill="#8a8a8a"/>
</svg>
<svg style="left:0;top:0" width="1" height="1">
<path d="M707 69.6 C720 69 746 69 759 69.6 C766 70 769 73.5 769.3 81 C770 91 770 101 769.3 111 C769 118.5 766 121.8 759 122.2 C746 122.8 720 122.8 707 122.2 C700 121.8 697 118.5 696.7 111 C696 101 696 91 696.7 81 C697 73.5 700 70 707 69.6Z" fill="#fff"/>
<path d="M708 72.8 C720 72.2 746 72.2 758 72.8 C763.5 73.1 766 76 766.2 82 C766.8 91 766.8 100.5 766.2 110 C766 116 763.5 118.6 758 118.9 C746 119.5 720 119.5 708 118.9 C702.5 118.6 700 116 699.8 110 C699.2 100.5 699.2 91 699.8 82 C700 76 702.5 73.1 708 72.8Z" fill="#ff0000"/>
<path d="M726.2 86 L743.2 96 L726.2 106Z" fill="#fff"/>
</svg>
<div class="t" style="left:815.98px;top:308.41px;font-size:23.5px;color:#222222;font-weight:normal;letter-spacing:0px;transform:scaleX(0.941);">How to</div>
<div class="t" style="left:815.98px;top:354.07px;font-size:14.8px;color:#404040;font-weight:normal;letter-spacing:0px;transform:scaleX(0.897);">We create an intuitive structure of layers and</div>
<div class="t" style="left:815.98px;top:372.77px;font-size:14.8px;color:#404040;font-weight:normal;letter-spacing:0px;transform:scaleX(0.897);">folders, and also supply with all the necessary</div>
<div class="t" style="left:815.98px;top:391.37px;font-size:14.8px;color:#404040;font-weight:normal;letter-spacing:0px;transform:scaleX(0.903);">video instructions, which makes the use of the</div>
<div class="t" style="left:815.98px;top:409.97px;font-size:14.8px;color:#404040;font-weight:normal;letter-spacing:0px;transform:scaleX(0.895);">product simple and fast.</div>
</body></html>
